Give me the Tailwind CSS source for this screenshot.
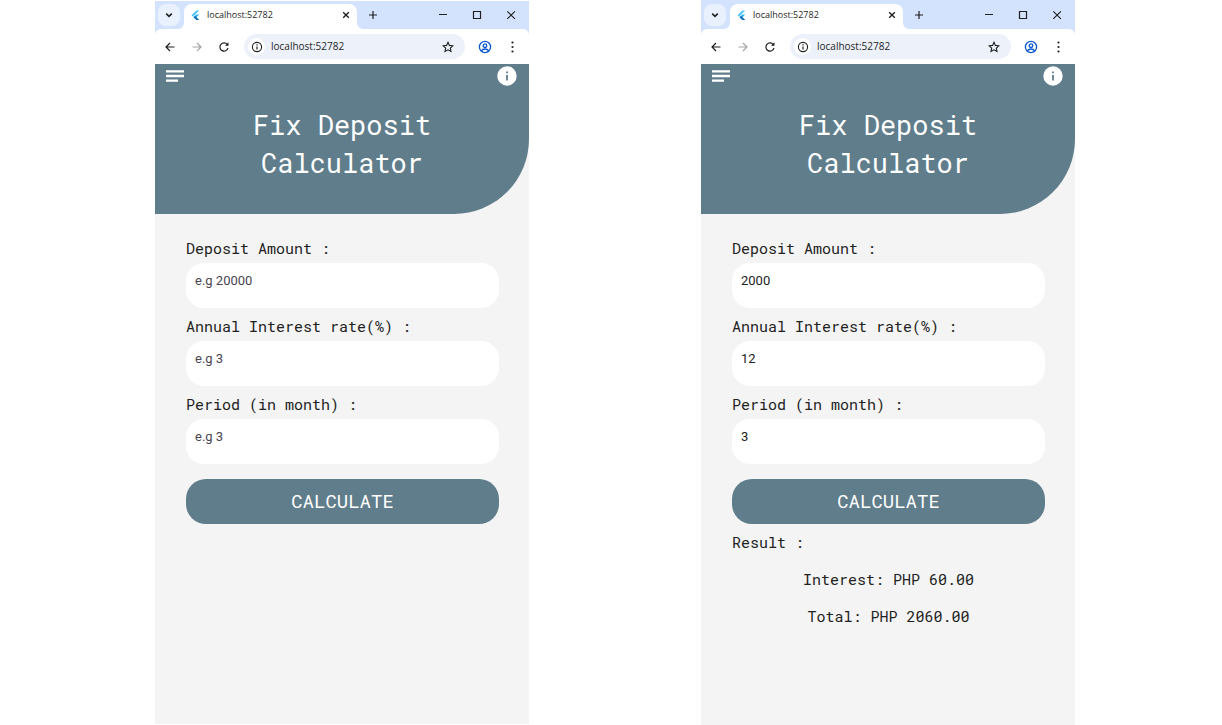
<!DOCTYPE html>
<html lang="en">
<head>
<meta charset="utf-8">
<meta name="viewport" content="width=device-width, initial-scale=1">
<title>Fix Deposit Calculator</title>
<script src="https://cdn.jsdelivr.net/npm/@tailwindcss/browser@4"></script>
</head>
<body class="bg-white">
<svg class="hidden" aria-hidden="true">
  <symbol id="chevron" viewBox="0 0 12 12"><path d="M3.200 4.600 6 7.400l2.800-2.800" fill="none" stroke="currentColor" stroke-width="1.600"/></symbol>
  <symbol id="flutter" viewBox="0 0 11 12"><path d="M6.300 1.500 1.500 6.200l1.500 1.500 6.200-6.200z" fill="#54c5f8"/><path d="M6.300 5.600 3.600 8.300l1.500 1.500 4.100-4.200z" fill="#29b6f6"/><path d="m5.100 6.800-1.500 1.500 2.700 2.700h2.900L6.500 8.300z" fill="#0a6ebd"/></symbol>
  <symbol id="close" viewBox="0 0 12 12"><path d="m3.200 3.200 5.600 5.600m0-5.600-5.600 5.600" fill="none" stroke="currentColor" stroke-width="1.400"/></symbol>
  <symbol id="plus" viewBox="0 0 12 12"><path d="M6 2v8M2 6h8" fill="none" stroke="currentColor" stroke-width="1.200"/></symbol>
  <symbol id="minimize" viewBox="0 0 12 12"><path d="M2 5.500h8" fill="none" stroke="currentColor"/></symbol>
  <symbol id="maximize" viewBox="0 0 12 12"><path d="M2.500 2.500h7v7h-7z" fill="none" stroke="currentColor" stroke-width="1.200"/></symbol>
  <symbol id="quit" viewBox="0 0 12 12"><path d="m2.300 2.300 7.600 7.600m0-7.600-7.600 7.600" fill="none" stroke="currentColor" stroke-width="1.100"/></symbol>
  <symbol id="back" viewBox="0 0 12 12"><path d="M10.500 6H2m4-4L2 6l4 4" fill="none" stroke="currentColor" stroke-width="1.200"/></symbol>
  <symbol id="forward" viewBox="0 0 12 12"><path d="M1.500 6H10M6 2l4 4-4 4" fill="none" stroke="currentColor" stroke-width="1.200"/></symbol>
  <symbol id="reload" viewBox="0 0 12 12"><path d="M9.300 3.500A4.100 4.100 0 1 0 10 7" fill="none" stroke="currentColor" stroke-width="1.200"/><path d="M10.500 1.200v3.600H6.900z" fill="currentColor"/></symbol>
  <symbol id="site" viewBox="0 0 12 12"><circle cx="6" cy="6" r="4.600" fill="none" stroke="currentColor" stroke-width="1.100"/><path d="M6 5.400v3M6 3.300v1.200" fill="none" stroke="currentColor" stroke-width="1.200"/></symbol>
  <symbol id="star" viewBox="0 0 12 12"><path d="m6 1.300 1.400 3.100 3.400.4-2.500 2.300.7 3.400-3-1.700-3 1.700.7-3.400-2.500-2.300 3.400-.4z" fill="none" stroke="currentColor" stroke-width="1.100"/></symbol>
  <symbol id="profile" viewBox="0 0 14 14"><g fill="none" stroke="currentColor" stroke-width="1.300"><circle cx="7" cy="7" r="5.600"/><circle cx="7" cy="5.700" r="1.800"/><path d="M3.200 10.900C4.200 9.600 5.500 9 7 9s2.800.6 3.800 1.900"/></g></symbol>
  <symbol id="dots" viewBox="0 0 12 12"><g fill="currentColor"><circle cx="6.500" cy="1.500" r="1.100"/><circle cx="6.500" cy="6" r="1.100"/><circle cx="6.500" cy="10.500" r="1.100"/></g></symbol>
  <symbol id="menu" viewBox="0 0 18 12"><path d="M0 1.300h18M0 6h18M0 10.700h12" fill="none" stroke="currentColor" stroke-width="2.300"/></symbol>
  <symbol id="info" viewBox="0 0 20 20"><circle cx="10" cy="10" r="9.700" fill="currentColor"/><path d="M10 9v5.500M10 5.500v1.800" fill="none" stroke="#607d8b" stroke-width="1.800"/></symbol>
  <symbol id="foot" viewBox="0 0 6 6"><path d="M0 0v6h6a6 6 0 0 1-6-6z" fill="currentColor"/></symbol>
</svg>

<main class="flex min-h-screen gap-[172px] pl-[155px] pr-[147px]">

  <section class="mt-px mb-px flex min-w-0 flex-1 flex-col bg-[#f4f4f4]" aria-label="Empty form">
    <div class="bg-[#d3e3fd] text-[#1f1f1f]">
      <div class="flex h-7 items-center pl-[3px] pr-3">
        <button class="flex size-[22px] items-center justify-center rounded-lg bg-[#e9f0fe]" aria-label="Search tabs"><svg class="size-3"><use href="#chevron"/></svg></button>
        <div class="relative ml-1 flex h-[25px] w-[173px] items-center self-end rounded-t-lg bg-white pb-[3px] pl-[6px] pr-[5px]">
          <svg class="absolute bottom-0 -left-[6px] size-[6px] -scale-x-100 text-white"><use href="#foot"/></svg>
          <svg class="absolute bottom-0 -right-[6px] size-[6px] text-white"><use href="#foot"/></svg>
          <svg class="h-3 w-[11px]"><use href="#flutter"/></svg>
          <span class="ml-[6px] font-['Open_Sans',sans-serif] text-[9px]">localhost:52782</span>
          <button class="ml-auto" aria-label="Close tab"><svg class="size-3"><use href="#close"/></svg></button>
        </div>
        <button class="ml-[10px]" aria-label="New tab"><svg class="size-3"><use href="#plus"/></svg></button>
        <div class="ml-auto flex gap-[22px]">
          <button aria-label="Minimize"><svg class="size-3"><use href="#minimize"/></svg></button>
          <button aria-label="Maximize"><svg class="size-3"><use href="#maximize"/></svg></button>
          <button aria-label="Close window"><svg class="size-3"><use href="#quit"/></svg></button>
        </div>
      </div>
      <div class="flex h-[35px] items-center rounded-t-md bg-white pl-[9px] pr-[11px]">
        <div class="flex gap-[15px]">
          <button aria-label="Back"><svg class="size-3"><use href="#back"/></svg></button>
          <button class="text-[#a5a5a5]" aria-label="Forward"><svg class="size-3"><use href="#forward"/></svg></button>
          <button aria-label="Reload"><svg class="size-3"><use href="#reload"/></svg></button>
        </div>
        <div class="mr-[13px] ml-[14px] flex h-[25px] flex-1 items-center rounded-full bg-[#ecf1fa] pl-1 pr-[11px]">
          <span class="flex size-[17px] shrink-0 items-center justify-center rounded-full bg-white"><svg class="size-3"><use href="#site"/></svg></span>
          <input class="ml-[6px] min-w-0 flex-1 font-['Open_Sans',sans-serif] text-[10px] outline-none" aria-label="Address" value="localhost:52782">
          <button aria-label="Bookmark"><svg class="size-3"><use href="#star"/></svg></button>
        </div>
        <button class="text-[#0b57d0]" aria-label="Profile"><svg class="size-[14px]"><use href="#profile"/></svg></button>
        <button class="ml-[14px]" aria-label="Browser menu"><svg class="size-3"><use href="#dots"/></svg></button>
      </div>
    </div>
    <header class="rounded-br-[75px] bg-[#607d8b] pb-8 text-white">
      <div class="flex h-6 items-center justify-between pl-[11px] pr-3">
        <button aria-label="Menu"><svg class="h-3 w-[18px]"><use href="#menu"/></svg></button>
        <button aria-label="Information"><svg class="size-5"><use href="#info"/></svg></button>
      </div>
      <h1 class="mt-[18px] text-center font-['Roboto_Mono','DejaVu_Sans_Mono',monospace] text-[27px] leading-[38px]">Fix Deposit<br>Calculator</h1>
    </header>
    <form class="flex flex-col pt-4 pl-[31px] pr-[30px] font-['Roboto_Mono','DejaVu_Sans_Mono',monospace] text-[15px] text-[#212121]">
      <label for="amount-a" class="pt-[3px] leading-[30px]">Deposit Amount :</label>
      <input id="amount-a" class="h-[45px] rounded-[18px] bg-white px-[9px] pb-[10px] font-[Roboto,sans-serif] text-[13px] outline-none placeholder:text-[#49454f]" placeholder="e.g 20000">
      <label for="rate-a" class="pt-[3px] leading-[30px]">Annual Interest rate(%) :</label>
      <input id="rate-a" class="h-[45px] rounded-[18px] bg-white px-[9px] pb-[10px] font-[Roboto,sans-serif] text-[13px] outline-none placeholder:text-[#49454f]" placeholder="e.g 3">
      <label for="period-a" class="pt-[3px] leading-[30px]">Period (in month) :</label>
      <input id="period-a" class="h-[45px] rounded-[18px] bg-white px-[9px] pb-[10px] font-[Roboto,sans-serif] text-[13px] outline-none placeholder:text-[#49454f]" placeholder="e.g 3">
      <button type="button" class="mt-[15px] h-[45px] rounded-[20px] bg-[#607d8b] text-[19px] text-white">CALCULATE</button>
    </form>
  </section>

  <section class="flex min-w-0 flex-1 flex-col bg-[#f4f4f4]" aria-label="Completed form">
    <div class="bg-[#d3e3fd] text-[#1f1f1f]">
      <div class="flex h-[29px] items-center pl-[3px] pr-3">
        <button class="flex size-[22px] items-center justify-center rounded-lg bg-[#e9f0fe]" aria-label="Search tabs"><svg class="size-3"><use href="#chevron"/></svg></button>
        <div class="relative ml-1 flex h-[25px] w-[173px] items-center self-end rounded-t-lg bg-white pb-[3px] pl-[6px] pr-[5px]">
          <svg class="absolute bottom-0 -left-[6px] size-[6px] -scale-x-100 text-white"><use href="#foot"/></svg>
          <svg class="absolute bottom-0 -right-[6px] size-[6px] text-white"><use href="#foot"/></svg>
          <svg class="h-3 w-[11px]"><use href="#flutter"/></svg>
          <span class="ml-[6px] font-['Open_Sans',sans-serif] text-[9px]">localhost:52782</span>
          <button class="ml-auto" aria-label="Close tab"><svg class="size-3"><use href="#close"/></svg></button>
        </div>
        <button class="ml-[10px]" aria-label="New tab"><svg class="size-3"><use href="#plus"/></svg></button>
        <div class="ml-auto flex gap-[22px]">
          <button aria-label="Minimize"><svg class="size-3"><use href="#minimize"/></svg></button>
          <button aria-label="Maximize"><svg class="size-3"><use href="#maximize"/></svg></button>
          <button aria-label="Close window"><svg class="size-3"><use href="#quit"/></svg></button>
        </div>
      </div>
      <div class="flex h-[35px] items-center rounded-t-md bg-white pl-[9px] pr-[11px]">
        <div class="flex gap-[15px]">
          <button aria-label="Back"><svg class="size-3"><use href="#back"/></svg></button>
          <button class="text-[#a5a5a5]" aria-label="Forward"><svg class="size-3"><use href="#forward"/></svg></button>
          <button aria-label="Reload"><svg class="size-3"><use href="#reload"/></svg></button>
        </div>
        <div class="mr-[13px] ml-[14px] flex h-[25px] flex-1 items-center rounded-full bg-[#ecf1fa] pl-1 pr-[11px]">
          <span class="flex size-[17px] shrink-0 items-center justify-center rounded-full bg-white"><svg class="size-3"><use href="#site"/></svg></span>
          <input class="ml-[6px] min-w-0 flex-1 font-['Open_Sans',sans-serif] text-[10px] outline-none" aria-label="Address" value="localhost:52782">
          <button aria-label="Bookmark"><svg class="size-3"><use href="#star"/></svg></button>
        </div>
        <button class="text-[#0b57d0]" aria-label="Profile"><svg class="size-[14px]"><use href="#profile"/></svg></button>
        <button class="ml-[14px]" aria-label="Browser menu"><svg class="size-3"><use href="#dots"/></svg></button>
      </div>
    </div>
    <header class="rounded-br-[75px] bg-[#607d8b] pb-8 text-white">
      <div class="flex h-6 items-center justify-between pl-[11px] pr-3">
        <button aria-label="Menu"><svg class="h-3 w-[18px]"><use href="#menu"/></svg></button>
        <button aria-label="Information"><svg class="size-5"><use href="#info"/></svg></button>
      </div>
      <h1 class="mt-[18px] text-center font-['Roboto_Mono','DejaVu_Sans_Mono',monospace] text-[27px] leading-[38px]">Fix Deposit<br>Calculator</h1>
    </header>
    <form class="flex flex-col pt-4 pl-[31px] pr-[30px] font-['Roboto_Mono','DejaVu_Sans_Mono',monospace] text-[15px] text-[#212121]">
      <label for="amount-b" class="pt-[3px] leading-[30px]">Deposit Amount :</label>
      <input id="amount-b" class="h-[45px] rounded-[18px] bg-white px-[9px] pb-[10px] font-[Roboto,sans-serif] text-[13px] outline-none" value="2000">
      <label for="rate-b" class="pt-[3px] leading-[30px]">Annual Interest rate(%) :</label>
      <input id="rate-b" class="h-[45px] rounded-[18px] bg-white px-[9px] pb-[10px] font-[Roboto,sans-serif] text-[13px] outline-none" value="12">
      <label for="period-b" class="pt-[3px] leading-[30px]">Period (in month) :</label>
      <input id="period-b" class="h-[45px] rounded-[18px] bg-white px-[9px] pb-[10px] font-[Roboto,sans-serif] text-[13px] outline-none" value="3">
      <button type="button" class="mt-[15px] h-[45px] rounded-[20px] bg-[#607d8b] text-[19px] text-white">CALCULATE</button>
      <h2 class="pt-[3px] leading-[30px]">Result :</h2>
      <output class="mt-1 text-center leading-[37px]" for="amount-b rate-b period-b"><p>Interest: PHP 60.00</p><p>Total: PHP 2060.00</p></output>
    </form>
  </section>
</main>
</body>
</html>
